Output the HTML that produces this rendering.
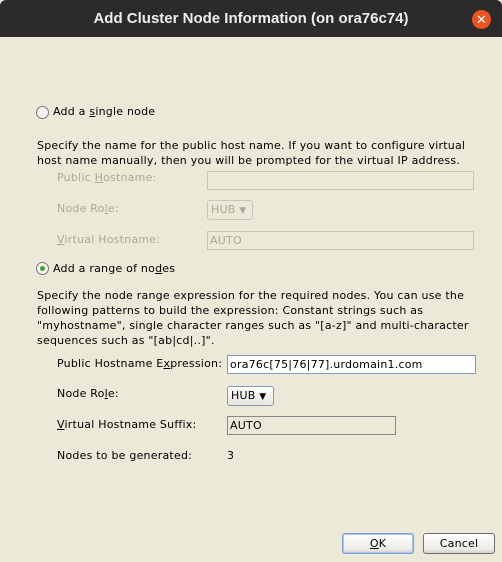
<!DOCTYPE html>
<html><head><meta charset="utf-8"><style>
*{margin:0;padding:0;box-sizing:border-box}
body{width:502px;height:562px;background:#ece9d8;position:relative;overflow:hidden;font-family:"DejaVu Sans",sans-serif;font-size:11px;letter-spacing:0.22px;color:#000}
.a{position:absolute;white-space:nowrap;line-height:14px}
.dis{color:#aca899}
.tb{position:absolute;left:0;top:0;width:502px;height:37px;background:#2c2a2a;border-radius:6px 6px 0 0;color:#eee;font-weight:bold;font-size:15px;letter-spacing:0;font-family:"Liberation Sans",sans-serif;text-align:center;line-height:37px}
.x{position:absolute;left:472px;top:10px;width:19px;height:19px;border-radius:50%;background:#e95420;color:#fff;font-size:13px;line-height:19px;text-align:center;font-weight:normal}
.in{position:absolute;height:19px;border:1px solid #7f9db9;background:#fff;padding-left:2px;line-height:17px}
.ind{border-color:#c9c7ba;background:#ece9d8;color:#aca899}
.rad{position:absolute;width:13px;height:13px;border-radius:50%;border:1px solid #777;background:#f3f3ef}
.sel{position:absolute;height:20px;border:1px solid #7f9db9;border-radius:3px;background:linear-gradient(#fff,#e6e4dc);padding-left:3px;line-height:18px}
.btn{position:absolute;height:21px;width:72px;border:1px solid #003c74;border-radius:3px;background:linear-gradient(#fff,#ecebe6 80%,#d6d0c5);text-align:center;line-height:19px}
u{text-decoration:underline}
</style></head><body>
<div class="tb">Add Cluster Node Information (on ora76c74)<div class="x">✕</div></div>

<div class="rad" style="left:36px;top:106px"></div>
<div class="a" style="left:53px;top:105px">Add a <u>s</u>ingle node</div>
<div class="a" style="left:37px;top:139px">Specify the name for the public host name. If you want to configure virtual</div>
<div class="a" style="left:37px;top:154px">host name manually, then you will be prompted for the virtual IP address.</div>

<div class="a dis" style="left:57px;top:171px">Public <u>H</u>ostname:</div>
<div class="in ind" style="left:207px;top:171px;width:267px"></div>
<div class="a dis" style="left:57px;top:202px">Node Ro<u>l</u>e:</div>
<div class="sel" style="left:207px;top:200px;width:46px;border-color:#c9c7ba;background:#ece9d8;color:#aca899">HUB <span style="font-size:9px">▼</span></div>
<div class="a dis" style="left:57px;top:233px"><u>V</u>irtual Hostname:</div>
<div class="in ind" style="left:207px;top:231px;width:267px">AUTO</div>

<div class="rad" style="left:36px;top:262px"><div style="position:absolute;left:3px;top:3px;width:5px;height:5px;border-radius:50%;background:#3ca43c"></div></div>
<div class="a" style="left:53px;top:262px">Add a range of no<u>d</u>es</div>
<div class="a" style="left:37px;top:289px">Specify the node range expression for the required nodes. You can use the</div>
<div class="a" style="left:37px;top:304px">following patterns to build the expression: Constant strings such as</div>
<div class="a" style="left:37px;top:319px">"myhostname", single character ranges such as "[a-z]" and multi-character</div>
<div class="a" style="left:37px;top:334px">sequences such as "[ab|cd|..]".</div>

<div class="a" style="left:57px;top:357px">Public Hostname E<u>x</u>pression:</div>
<div class="in" style="left:227px;top:355px;width:249px">ora76c[75|76|77].urdomain1.com</div>
<div class="a" style="left:57px;top:387px">Node Ro<u>l</u>e:</div>
<div class="sel" style="left:227px;top:386px;width:47px">HUB <span style="font-size:9px">▼</span></div>
<div class="a" style="left:57px;top:418px"><u>V</u>irtual Hostname Suffix:</div>
<div class="in" style="left:227px;top:416px;width:169px;background:#ece9d8;border-color:#888">AUTO</div>
<div class="a" style="left:57px;top:449px">Nodes to be generated:</div>
<div class="a" style="left:227px;top:449px">3</div>

<div class="btn" style="left:342px;top:533px;border-color:#7b9fd6;box-shadow:inset 0 0 0 1px #a9c4ef"><u>O</u>K</div>
<div class="btn" style="left:423px;top:533px;border-color:#707070">Cancel</div>
</body></html>
